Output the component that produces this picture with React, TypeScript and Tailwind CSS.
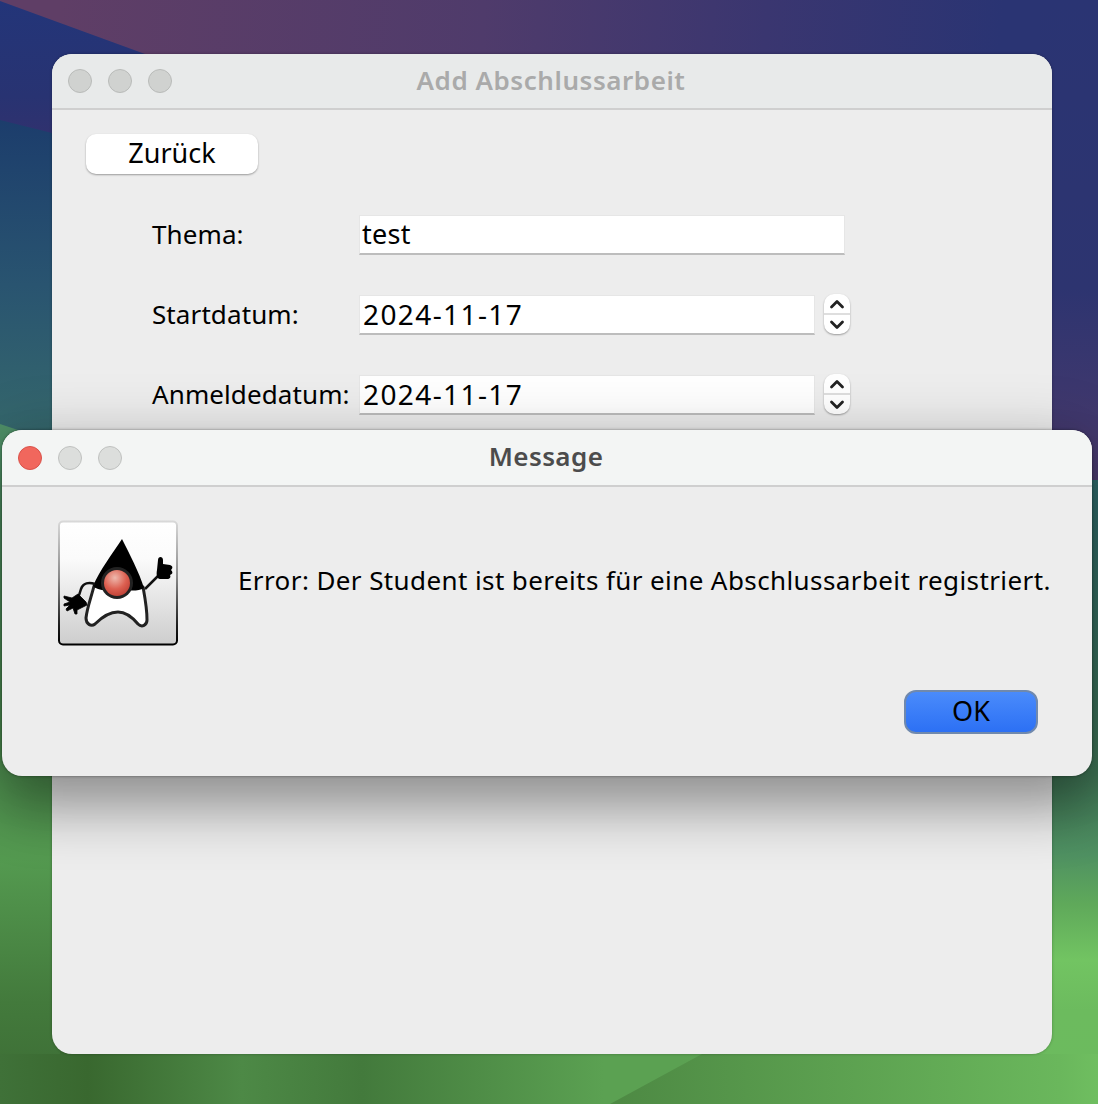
const font = "font-['Noto_Sans','DejaVu_Sans',sans-serif]";

function Wallpaper() {
  return (
    <svg className="absolute inset-0" width="1098" height="1104" viewBox="0 0 1098 1104">
      <defs>
        <linearGradient id="top" gradientUnits="userSpaceOnUse" x1="60" y1="0" x2="1000" y2="60">
          <stop offset="0" stopColor="#5f3e66" />
          <stop offset="0.45" stopColor="#4f3b6b" />
          <stop offset="0.75" stopColor="#3a3670" />
          <stop offset="1" stopColor="#2a3473" />
        </linearGradient>
        <linearGradient id="right" x1="0" y1="0" x2="0" y2="1">
          <stop offset="0" stopColor="#2a3473" />
          <stop offset="0.6" stopColor="#2d3470" />
          <stop offset="1" stopColor="#4a3a6c" />
        </linearGradient>
        <linearGradient id="blue" x1="0" y1="0" x2="0" y2="1">
          <stop offset="0" stopColor="#233579" />
          <stop offset="0.6" stopColor="#283372" />
          <stop offset="1" stopColor="#35306c" />
        </linearGradient>
        <linearGradient id="teal" x1="0" y1="0" x2="0" y2="1">
          <stop offset="0" stopColor="#1c3d6c" />
          <stop offset="0.5" stopColor="#295470" />
          <stop offset="1" stopColor="#376a6c" />
        </linearGradient>
        <linearGradient id="leftGreen" x1="0" y1="0" x2="0" y2="1">
          <stop offset="0" stopColor="#4f9068" />
          <stop offset="0.5" stopColor="#4f9050" />
          <stop offset="0.64" stopColor="#549a50" />
          <stop offset="0.85" stopColor="#437a3c" />
          <stop offset="1" stopColor="#3c6b34" />
        </linearGradient>
        <linearGradient id="rightGreen" gradientUnits="userSpaceOnUse" x1="0" y1="480" x2="0" y2="1104">
          <stop offset="0" stopColor="#2f6a6b" />
          <stop offset="0.47" stopColor="#3f7455" />
          <stop offset="0.6" stopColor="#4f9162" />
          <stop offset="0.68" stopColor="#5fa95a" />
          <stop offset="0.77" stopColor="#72c462" />
          <stop offset="0.85" stopColor="#6cbb5e" />
          <stop offset="1" stopColor="#6cba5e" />
        </linearGradient>
        <linearGradient id="bottom" gradientUnits="userSpaceOnUse" x1="0" y1="0" x2="1098" y2="0">
          <stop offset="0" stopColor="#3f7138" />
          <stop offset="0.08" stopColor="#39682f" />
          <stop offset="0.22" stopColor="#4d8946" />
          <stop offset="0.33" stopColor="#437a3c" />
          <stop offset="0.55" stopColor="#5ba152" />
          <stop offset="0.62" stopColor="#5ba152" />
          <stop offset="1" stopColor="#6cba5e" />
        </linearGradient>
        <linearGradient id="bottomRight" gradientUnits="userSpaceOnUse" x1="620" y1="0" x2="1098" y2="0">
          <stop offset="0" stopColor="#4e8a44" />
          <stop offset="0.92" stopColor="#6ab75c" />
          <stop offset="1" stopColor="#6fbe60" />
        </linearGradient>
      </defs>
      <rect width="1098" height="480" fill="url(#top)" />
      <rect x="1040" width="58" height="480" fill="url(#right)" />
      <path d="M0 1 L145 54 L145 160 L0 125 Z" fill="url(#blue)" />
      <path d="M0 120 L60 135 L60 450 L0 450 Z" fill="url(#teal)" />
      <path d="M0 424 L60 444 L60 1104 L0 1104 Z" fill="url(#leftGreen)" />
      <rect x="1040" y="480" width="58" height="624" fill="url(#rightGreen)" />
      <rect x="60" y="1030" width="980" height="30" fill="url(#bottom)" />
      <rect x="0" y="1054" width="1098" height="50" fill="url(#bottom)" />
      <path d="M702 1054 L1098 1054 L1098 1104 L610 1104 Z" fill="url(#bottomRight)" />
    </svg>
  );
}

function Lights({ active, off }: { active?: boolean; off: string }) {
  const cls = `h-6 w-6 rounded-full border ${off}`;
  return (
    <div className="flex items-center gap-4">
      <div className={active ? "h-6 w-6 rounded-full border border-[#d9524a] bg-[#f1675d]" : cls} />
      <div className={cls} />
      <div className={cls} />
    </div>
  );
}

function Stepper() {
  return (
    <div className="ml-[9px] flex h-10 w-[26px] flex-col rounded-[10px] bg-white shadow-[0_1px_2px_rgba(0,0,0,0.35)]">
      <div className="flex flex-1 items-center justify-center border-b-2 border-[#dedede]">
        <svg width="16" height="10" viewBox="0 0 16 10" fill="none" stroke="#222" strokeWidth="2.8" strokeLinecap="round" strokeLinejoin="round"><path d="M2.5 8 L8 2.5 L13.5 8" /></svg>
      </div>
      <div className="flex flex-1 items-center justify-center">
        <svg width="16" height="10" viewBox="0 0 16 10" fill="none" stroke="#222" strokeWidth="2.8" strokeLinecap="round" strokeLinejoin="round"><path d="M2.5 2 L8 7.5 L13.5 2" /></svg>
      </div>
    </div>
  );
}

function DateRow({ label, last }: { label: string; last?: boolean }) {
  return (
    <div className={`flex h-10 items-center ${last ? "" : "mb-10"}`}>
      <div className="w-[207px] text-[26px] leading-none tracking-[0.1px] text-black">{label}</div>
      <div className="mt-[2px] flex h-10 w-[456px] items-center border border-b-2 border-[#e6e6e6] border-b-[#bdbdbd] bg-white pb-[2px] pl-[3px] text-[28px] tracking-[1.4px] text-black">2024-11-17</div>
      <Stepper />
    </div>
  );
}

function Duke() {
  return (
    <svg width="120" height="126" viewBox="0 0 120 126" className="block">
      <defs>
        <linearGradient id="tile" x1="0" y1="0" x2="0" y2="1">
          <stop offset="0" stopColor="#ffffff" />
          <stop offset="0.3" stopColor="#fbfbfb" />
          <stop offset="1" stopColor="#cdcdcd" />
        </linearGradient>
        <linearGradient id="edge" x1="0" y1="0" x2="0" y2="1">
          <stop offset="0" stopColor="#d8d8d8" />
          <stop offset="0.45" stopColor="#8a8a8a" />
          <stop offset="0.85" stopColor="#1c1c1c" />
          <stop offset="1" stopColor="#000000" />
        </linearGradient>
        <radialGradient id="nose" cx="0.42" cy="0.3" r="0.8">
          <stop offset="0" stopColor="#eeb9ad" />
          <stop offset="0.55" stopColor="#dc5f50" />
          <stop offset="1" stopColor="#b83a30" />
        </radialGradient>
      </defs>
      <rect x="1" y="1.5" width="118" height="123" rx="4" fill="url(#tile)" stroke="url(#edge)" strokeWidth="2" />
      <path d="M36 66 C33 78 29 88 28 98 C28 104 33 107 37 104 C44 97 52 92 60 92 C68 92 75 98 80 104 C84 108 89 105 89 100 C89 88 87 78 85 67 Z" fill="#fff" stroke="#222" strokeWidth="3" strokeLinejoin="round" />
      <path d="M64 19 C71 33 81 52 86 68 C80 72 70 70 60 70 C52 70 42 72 35 66 C42 50 54 34 64 19 Z" fill="#000" />
      <circle cx="59" cy="63" r="16" fill="#222" />
      <circle cx="59" cy="63" r="13" fill="url(#nose)" />
      <path d="M37 64 C31 62 25 63 23 69 C22 73 21 76 19 79" fill="none" stroke="#111" strokeWidth="2.5" />
      <path d="M6 76 L14 78 L20 74 L28 82 L29 85 L23 88 L19 90 L19 94 L17 94 L15 88 L9 91 L8 89 L12 85 L6 86 L6 84 L12 82 L6 78 Z" fill="#000" stroke="#000" strokeWidth="0.8" strokeLinejoin="round" />
      <path d="M87 69 L100 56" fill="none" stroke="#111" strokeWidth="2.5" />
      <path d="M99 50 L100 40 C100 36 105 36 105 40 L105 44 L112 45 C115 46 115 48 113 50 C115 52 115 54 112 55 C113 57 112 59 109 59 L102 59 C99 59 98 55 99 50 Z" fill="#000" />
    </svg>
  );
}

export default function App() {
  return (
    <div className={`relative h-[1104px] w-[1098px] overflow-hidden ${font}`}>
      <Wallpaper />

      {/* back window */}
      <div className="absolute left-[52px] top-[54px] h-[1000px] w-[1000px] overflow-hidden rounded-[20px] bg-[#ededed] shadow-[0_0_3px_rgba(0,0,0,0.3)]">
        <div className="relative flex h-[56px] items-center border-b-2 border-[#cfcfcf] bg-[#e8eaea] pl-4">
          <Lights off="border-[#b9bbb9] bg-[#d0d2d0]" />
          <div className="absolute inset-x-0 top-2 pr-[2px] text-center text-[26px] font-semibold leading-9 tracking-[0.55px] text-[#aaaaaa]">Add Abschlussarbeit</div>
        </div>
        <div className="pl-[34px] pt-[24px]">
          <div className="flex h-10 w-[172px] items-center justify-center rounded-[10px] bg-white pb-px text-[27px] text-black shadow-[0_1px_2px_rgba(0,0,0,0.35)]">Zurück</div>
          <div className="pl-[66px] pt-[40px]">
            <div className="mb-10 flex h-10 items-center">
              <div className="w-[207px] text-[26px] leading-none tracking-[0.1px] text-black">Thema:</div>
              <div className="mt-[2px] flex h-10 w-[486px] items-center border border-b-2 border-[#e6e6e6] border-b-[#bdbdbd] bg-white pl-[2px] text-[27px] tracking-[0.3px] text-black">test</div>
            </div>
            <DateRow label="Startdatum:" />
            <DateRow label="Anmeldedatum:" last />
          </div>
        </div>
      </div>

      {/* message dialog */}
      <div className="absolute left-[2px] top-[430px] h-[346px] w-[1090px] overflow-hidden rounded-[20px] bg-[#ededed] shadow-[0_36px_55px_rgba(0,0,0,0.32),0_0_60px_rgba(0,0,0,0.16),0_0_3px_rgba(0,0,0,0.45)]">
        <div className="relative flex h-[57px] items-center border-b-2 border-[#cfcfcf] bg-[#f3f5f4] pl-4">
          <Lights active off="border-[#bfc1bf] bg-[#dcdedc]" />
          <div className="absolute inset-x-0 top-2 pr-[2px] text-center text-[26px] font-semibold leading-9 tracking-[0.4px] text-[#4c4c4c]">Message</div>
        </div>
        <div className="flex items-center pl-[56px] pt-[33px]">
          <Duke />
          <div className="mb-[6px] ml-[60px] whitespace-nowrap text-[26px] leading-none tracking-[0.4px] text-black">Error: Der Student ist bereits für eine Abschlussarbeit registriert.</div>
        </div>
        <div className="flex justify-end pr-[54px] pt-[44px]">
          <div className="flex h-11 w-[134px] items-center justify-center rounded-[12px] border-2 border-[#7089ad] bg-gradient-to-b from-[#4a8bfb] to-[#2c70f4] pb-[2px] text-[27px] text-black">OK</div>
        </div>
      </div>
    </div>
  );
}
